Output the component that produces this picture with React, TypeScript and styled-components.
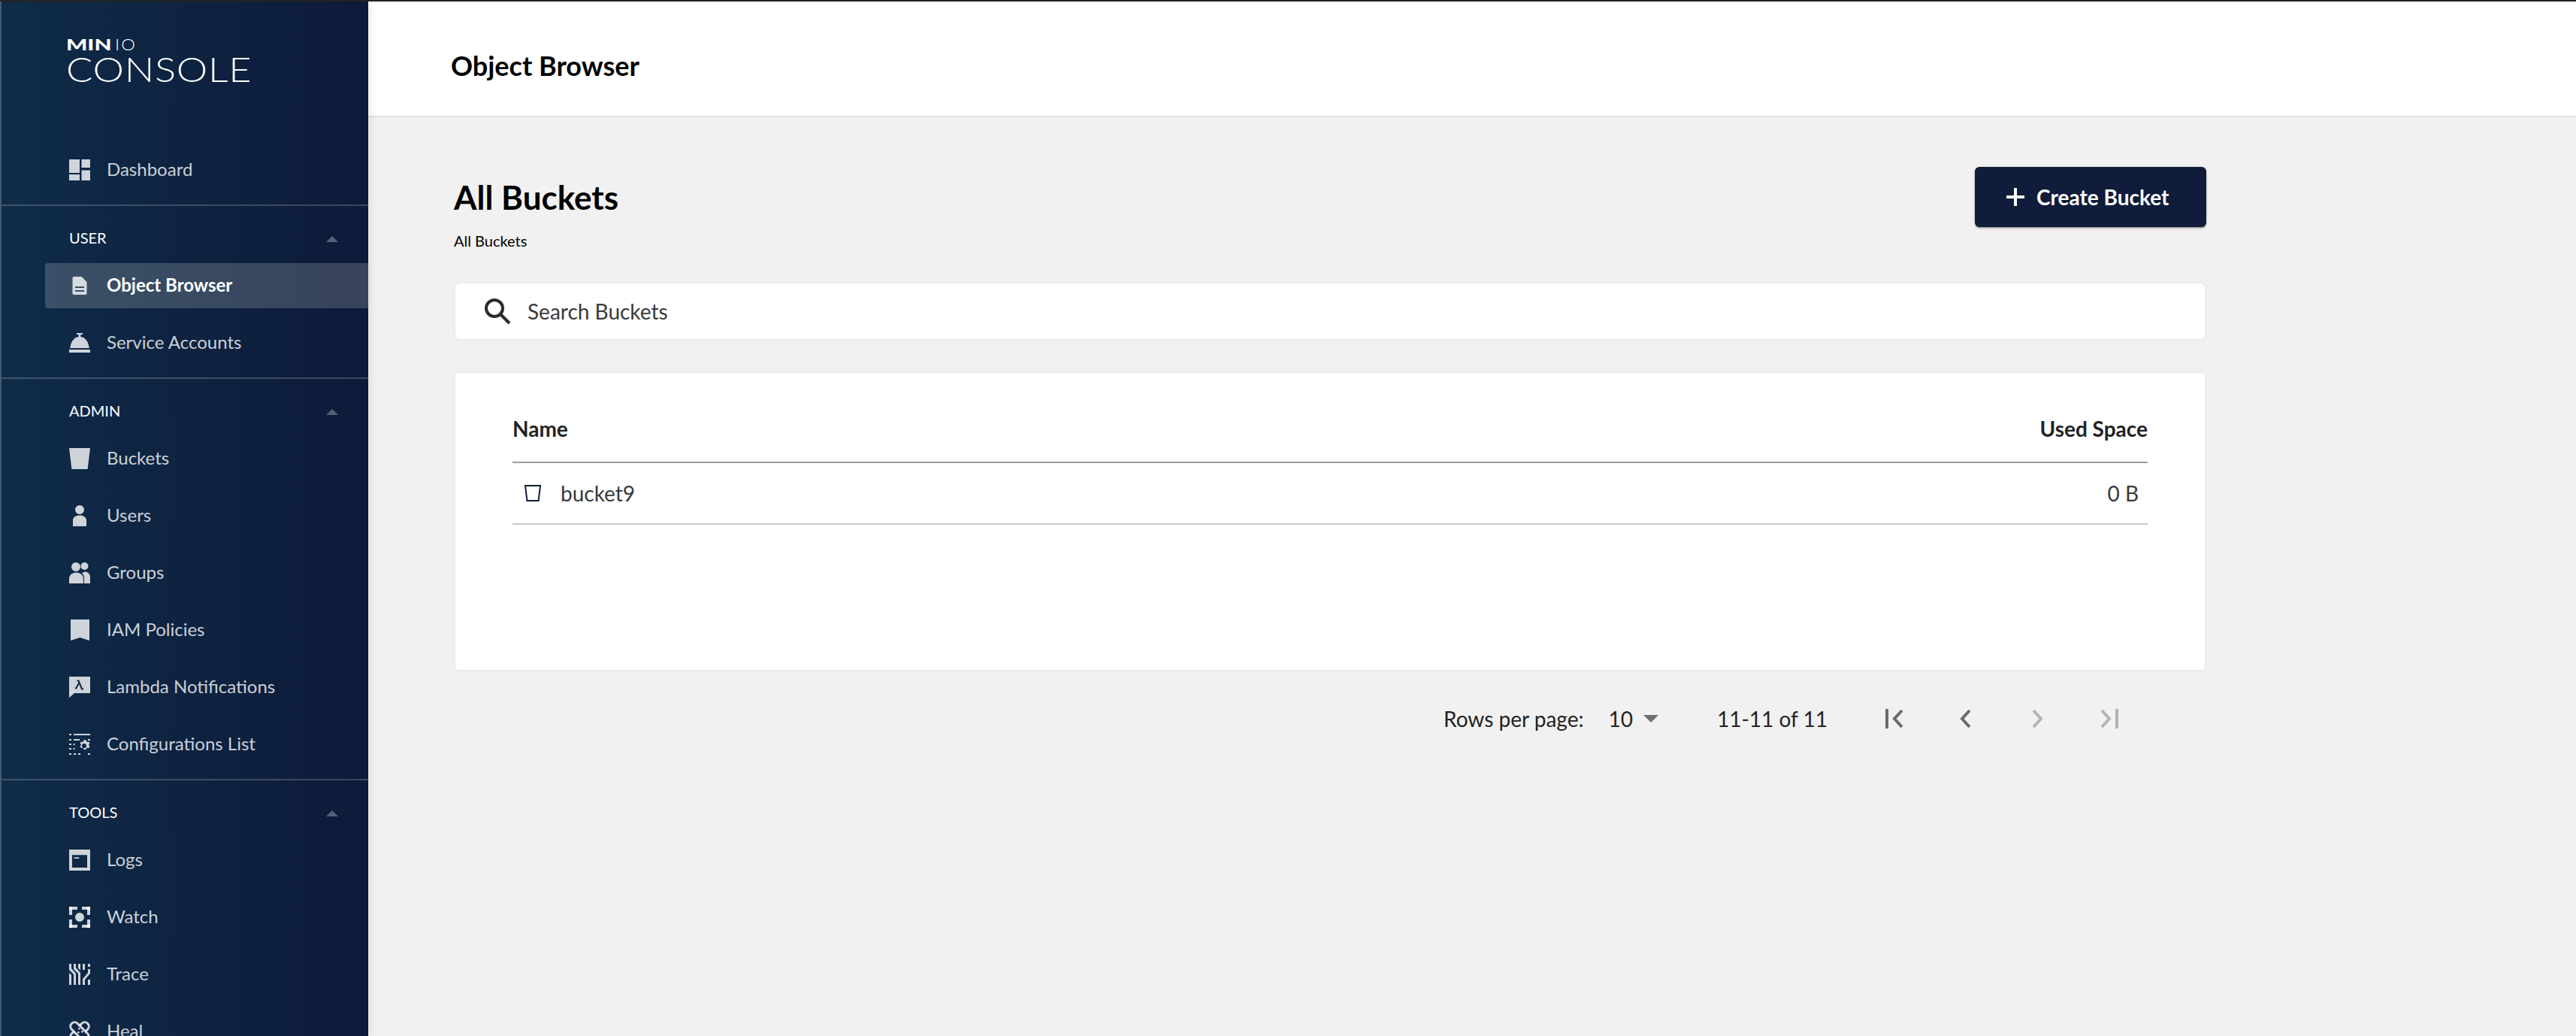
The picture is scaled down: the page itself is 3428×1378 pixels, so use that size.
import React from "react";
import styled, { createGlobalStyle } from "styled-components";

const Global = createGlobalStyle`
  html, body { margin: 0; padding: 0; height: 100%; overflow: hidden; background: #f1f1f1; }
  body { font-family: "Lato", "Liberation Sans", sans-serif; -webkit-font-smoothing: antialiased; }
  * { box-sizing: border-box; }
`;

const Shell = styled.div`
  display: flex;
  height: 1378px;
  border-top: 2px solid #232323;
  overflow: hidden;
`;
const Sidebar = styled.aside`
  width: 490px;
  flex: none;
  height: 1376px;
  overflow: hidden;
  border-left: 2px solid #49596d;
  background: linear-gradient(90deg, #0f2c48 0%, #0d1a39 100%);
  box-shadow: 0 0 12px rgba(0, 0, 0, 0.14);
  position: relative;
  z-index: 2;
`;
const LogoBlock = styled.div`
  height: 194px;
  padding: 45px 0 0 86px;
  color: #fff;
`;
const LogoTop = styled.div`
  display: flex;
  align-items: baseline;
  height: 25px;
  font-size: 21px;
  line-height: 24px;
`;
const LogoHeavy = styled.span`
  font-weight: 900;
  display: inline-block;
  transform: scaleX(1.42);
  transform-origin: left center;
  width: 45px;
  margin-right: 20px;
`;
const LogoThin = styled.span`
  font-weight: 300;
  letter-spacing: 2px;
  display: inline-block;
  transform: scaleX(1.12);
  transform-origin: left center;
`;
const LogoMain = styled.div`
  width: 210px;
  font-size: 45px;
  line-height: 40px;
  font-weight: 300;
  letter-spacing: 0.6px;
  transform: scaleX(1.165);
  transform-origin: left center;
`;
const Item = styled.div<{ $active?: boolean }>`
  display: flex;
  align-items: center;
  height: 60px;
  margin: 0 0 16px 58px;
  padding-left: 32px;
  border-radius: 4px 0 0 4px;
  background: ${(p) => (p.$active ? "rgba(255,255,255,0.18)" : "transparent")};
  color: ${(p) => (p.$active ? "#fff" : "rgba(255,255,255,0.8)")};
  font-size: 24px;
  font-weight: ${(p) => (p.$active ? 700 : 400)};
`;
const ItemIcon = styled.svg`
  width: 28px;
  height: 28px;
  flex: none;
  margin-right: 22px;
  fill: rgba(255, 255, 255, 0.8);
`;
const ItemLabel = styled.span`
  margin-top: -3px;
`;
const Divider = styled.div`
  height: 2px;
  margin-left: -2px;
  background: rgba(255, 255, 255, 0.2);
`;
const SectionHead = styled.div`
  height: 76px;
  padding: 30px 40px 0 90px;
  display: flex;
  justify-content: space-between;
  align-items: flex-start;
  color: #fff;
  font-size: 20px;
  line-height: 24px;
`;
const Caret = styled.span`
  width: 0;
  height: 0;
  margin-top: 10px;
  border-left: 8px solid transparent;
  border-right: 8px solid transparent;
  border-bottom: 8px solid rgba(255, 255, 255, 0.3);
`;
const Main = styled.main`
  flex: 1;
  min-width: 0;
`;
const TopBar = styled.header`
  height: 154px;
  background: #fff;
  border-bottom: 2px solid #e0e0e0;
  padding: 17px 0 0 110px;
  display: flex;
  align-items: center;
  font-size: 36px;
  font-weight: 700;
  color: #000;
`;
const Content = styled.div`
  width: 2446px;
  padding: 66px 0 0 114px;
`;
const HeadRow = styled.div`
  display: flex;
  justify-content: space-between;
  align-items: center;
  height: 80px;
`;
const PageTitle = styled.h1`
  margin: 0 0 1px;
  font-size: 44px;
  font-weight: 700;
  color: #000;
`;
const CreateButton = styled.button`
  height: 80px;
  width: 308px;
  display: flex;
  align-items: center;
  padding: 0 0 0 42px;
  border: 0;
  border-radius: 6px;
  background: #0f1c3a;
  color: #fff;
  font: 700 28px "Lato", sans-serif;
  box-shadow: 0 3px 1px -2px rgba(0, 0, 0, 0.2), 0 2px 2px 0 rgba(0, 0, 0, 0.14), 0 1px 5px 0 rgba(0, 0, 0, 0.12);
`;
const PlusIcon = styled.svg`
  width: 24px;
  height: 24px;
  margin-right: 16px;
  stroke: #fff;
  stroke-width: 4;
`;
const Crumb = styled.div`
  margin-top: 6px;
  height: 24px;
  line-height: 24px;
  font-size: 20px;
  color: #000;
`;
const SearchBox = styled.div`
  margin-top: 43px;
  height: 78px;
  display: flex;
  align-items: center;
  padding-left: 38px;
  background: #fff;
  border: 2px solid #e9eded;
  border-radius: 8px;
  color: #393939;
  font-size: 28px;
`;
const SearchIcon = styled.svg`
  width: 36px;
  height: 36px;
  margin-right: 22px;
  fill: none;
  stroke: #2b2b2b;
  stroke-width: 4;
`;
const Card = styled.section`
  margin-top: 41px;
  height: 399px;
  padding: 0 76px;
  background: #fff;
  border: 2px solid #e9eded;
  border-radius: 6px;
`;
const HeadCells = styled.div`
  height: 120px;
  padding-top: 29px;
  display: flex;
  justify-content: space-between;
  align-items: center;
  border-bottom: 2px solid #9c9c9c;
  font-size: 28px;
  font-weight: 700;
  color: #232323;
`;
const DataRow = styled.div`
  height: 82px;
  display: flex;
  align-items: center;
  border-bottom: 2px solid #c8c8c8;
  font-size: 28px;
  color: #393939;
  padding: 0 12px 0 16px;
`;
const BucketOutline = styled.svg`
  width: 22px;
  height: 22px;
  margin-right: 26px;
  fill: none;
  stroke: #0f1c3a;
  stroke-width: 2;
`;
const Grow = styled.span`
  flex: 1;
`;
const Pager = styled.div`
  margin-top: 38px;
  height: 50px;
  display: flex;
  justify-content: flex-end;
  align-items: center;
  padding-right: 81px;
  font-size: 28px;
  color: #232323;
`;
const SelectValue = styled.span`
  margin-left: 33px;
`;
const SelectCaret = styled.span`
  margin-left: 14px;
  width: 0;
  height: 0;
  border-left: 10px solid transparent;
  border-right: 10px solid transparent;
  border-top: 10px solid #6e6e6e;
`;
const RangeText = styled.span`
  margin: 0 39px 0 78px;
`;
const PagerIcon = styled.svg<{ $off?: boolean }>`
  width: 96px;
  height: 28px;
  fill: none;
  stroke: ${(p) => (p.$off ? "#b4b4b4" : "#6b6b6b")};
  stroke-width: 4;
`;

const sideIcons: Record<string, React.ReactNode> = {
  dashboard: <path d="M0 0h14v18H0zM0 20h14v8H0zM16.500 0H28v11H16.500zM16.500 14.500H28V28H16.500z" />,
  doc: <path fillRule="evenodd" d="M6.500 2h10l7 7v15a2 2 0 0 1-2 2h-15a2 2 0 0 1-2-2V4a2 2 0 0 1 2-2zM8 15v2h12v-2zM8 20v2h12v-2z" />,
  bell: <path d="M10 1h8v2h-2.600v3c5.800.700 10.400 6 11.300 15H1.300C2.200 12 6.800 6.700 12.600 6V3H10zM0 23h28v4H0z" />,
  bucket: <path d="M0 0h28l-3.400 28H3.400z" />,
  user: <path d="M14 0a6 6 0 1 1 0 12 6 6 0 0 1 0-12zM5 28v-8c0-4 4-6.500 9-6.500s9 2.500 9 6.500v8z" />,
  users: <path d="M9 0a6 6 0 1 1 0 12A6 6 0 0 1 9 0zM20.500 0a5 5 0 1 1 0 10 5 5 0 0 1 0-10zM0 28v-6c0-5 4-8.500 9.500-8.500s9.500 3.500 9.500 8.500v6zM20 28v-7c0-3-1-5-3-7 1.500-1 3-1.500 4.500-1.500 3.700 0 6.500 3.500 6.500 7.500v8z" />,
  bookmark: <path d="M2 0h25v28l-12.500-4L2 28z" />,
  lambda: (
    <>
      <path d="M0 0h28v22H7l-7 6z" />
      <path d="M8.500 16.500l5-8.500-1-2.500H10.500M13.500 8l3.500 8.500h2" fill="none" stroke="#0f2444" strokeWidth="2" />
    </>
  ),
  config: <path d="M0 0h3v2H0zM6 0h22v2H6zM0 7h3v2H0zM6 7h8v2H6zM0 13h3v2H0zM5.500 13h2v2h-2zM0 19h3v2H0zM5.500 19h2v2h-2zM0 26h3v2H0zM6 26h3v2H6zM12 26h3v2h-3zM25 26h3v2h-3zM25 7h3v2h-3zM20 8l2.500.500 1 2.500 2.500-.500 1.500 2-1.500 2 1.500 2.500-1.500 2-2.500-.500-1 2.500h-3l-1-2.500-2.500.500-1.500-2 1.500-2.500-1.500-2 1.500-2 2.500.500 1-2.500zM20 13a3 3 0 1 0 0 6 3 3 0 0 0 0-6z" fillRule="evenodd" />,
  logs: <path fillRule="evenodd" d="M0 0h28v28H0zM4 7.300V24h20V7.300zM6.700 10.300h6.600V12H6.700z" />,
  watch: (
    <>
      <path d="M4 0h7v4H4zM17 0h7v4h-7zM0 4h4v7H0zM24 4h4v7h-4zM0 17h4v7H0zM24 17h4v7h-4zM4 24h7v4H4zM17 24h7v4h-7zM14 8a6 6 0 1 1 0 12 6 6 0 0 1 0-12z" />
      <path d="M0 0h4v4H0zM24 0h4v4h-4zM0 24h4v4H0zM24 24h4v4h-4z" fill="#fff" />
    </>
  ),
  trace: <path d="M0 0h3v6l6 7v15H6V14L0 8zM0 12l3 3v13H0zM6 0h3v5l6 7v16h-3V13L6 7zM12 0h3v9l-3-3.500zM18 0h3v8h-3zM25 0h3v4h-3zM25 7h3v6l-7 8v7h-3v-8l7-8zM25 21h3v7h-3z" />,
  heal: (
    <>
      <rect x="-1" y="8.500" width="30" height="11" rx="5.500" fill="none" stroke="rgba(255,255,255,0.8)" strokeWidth="3" transform="rotate(-45 14 14)" />
      <rect x="-1" y="8.500" width="30" height="11" rx="5.500" fill="#0f2444" stroke="rgba(255,255,255,0.8)" strokeWidth="3" transform="rotate(45 14 14)" />
      <path d="M12 9h2.500v2.500H12zM16 13h2.500v2.500H16zM11 14h2.500v2.500H11z" />
    </>
  ),
};

const Nav = ({ icon, label, active }: { icon: string; label: string; active?: boolean }) => (
  <Item $active={active}>
    <ItemIcon viewBox="0 0 28 28">{sideIcons[icon]}</ItemIcon>
    <ItemLabel>{label}</ItemLabel>
  </Item>
);

const Section = ({ title }: { title: string }) => (
  <SectionHead>
    {title}
    <Caret />
  </SectionHead>
);

export default function App() {
  return (
    <>
      <Global />
      <Shell>
        <Sidebar>
          <LogoBlock>
            <LogoTop>
              <LogoHeavy>MIN</LogoHeavy>
              <LogoThin>IO</LogoThin>
            </LogoTop>
            <LogoMain>CONSOLE</LogoMain>
          </LogoBlock>
          <Nav icon="dashboard" label="Dashboard" />
          <Divider />
          <Section title="USER" />
          <Nav icon="doc" label="Object Browser" active />
          <Nav icon="bell" label="Service Accounts" />
          <Divider />
          <Section title="ADMIN" />
          <Nav icon="bucket" label="Buckets" />
          <Nav icon="user" label="Users" />
          <Nav icon="users" label="Groups" />
          <Nav icon="bookmark" label="IAM Policies" />
          <Nav icon="lambda" label="Lambda Notifications" />
          <Nav icon="config" label="Configurations List" />
          <Divider />
          <Section title="TOOLS" />
          <Nav icon="logs" label="Logs" />
          <Nav icon="watch" label="Watch" />
          <Nav icon="trace" label="Trace" />
          <Nav icon="heal" label="Heal" />
        </Sidebar>
        <Main>
          <TopBar>Object Browser</TopBar>
          <Content>
            <HeadRow>
              <PageTitle>All Buckets</PageTitle>
              <CreateButton>
                <PlusIcon viewBox="0 0 24 24">
                  <path d="M12 0v24M0 12h24" />
                </PlusIcon>
                Create Bucket
              </CreateButton>
            </HeadRow>
            <Crumb>All Buckets</Crumb>
            <SearchBox>
              <SearchIcon viewBox="0 0 36 36">
                <circle cx="14" cy="14" r="11" />
                <path d="M22 22l12 12" />
              </SearchIcon>
              Search Buckets
            </SearchBox>
            <Card>
              <HeadCells>
                <span>Name</span>
                <span>Used Space</span>
              </HeadCells>
              <DataRow>
                <BucketOutline viewBox="0 0 22 22">
                  <path d="M1 1h20l-2.400 20H3.400z" />
                </BucketOutline>
                <Grow>bucket9</Grow>
                <span>0 B</span>
              </DataRow>
            </Card>
            <Pager>
              <span>Rows per page:</span>
              <SelectValue>10</SelectValue>
              <SelectCaret />
              <RangeText>11-11 of 11</RangeText>
              <PagerIcon viewBox="0 0 96 28">
                <path d="M40 1v26M60 3L50 14l10 11" />
              </PagerIcon>
              <PagerIcon viewBox="0 0 96 28">
                <path d="M54 3L44 14l10 11" />
              </PagerIcon>
              <PagerIcon viewBox="0 0 96 28" $off>
                <path d="M43 3l10 11-10 11" />
              </PagerIcon>
              <PagerIcon viewBox="0 0 96 28" $off>
                <path d="M58 1v26M38 3l10 11-10 11" />
              </PagerIcon>
            </Pager>
          </Content>
        </Main>
      </Shell>
    </>
  );
}
